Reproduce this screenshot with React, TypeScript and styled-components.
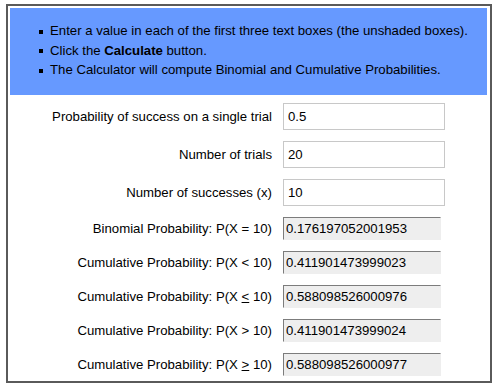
import React from "react";
import styled, { createGlobalStyle } from "styled-components";

const Global = createGlobalStyle`
  html, body { margin: 0; padding: 0; background: #fff; }
  body { font-family: "Liberation Sans", Arial, Helvetica, sans-serif; font-size: 13.2px; color: #000; }
`;

const Page = styled.div`
  padding: 4px 0 0 6px;
`;

const Frame = styled.div`
  border: 2px solid #5a5a5a;
  padding: 2px 3px 0 2px;
  box-sizing: content-box;
  width: 477px;
`;

const Instructions = styled.ul`
  margin: 0;
  background: #6699ff;
  padding: 13px 8px 15px 40px;
  list-style: none;
`;

const Item = styled.li`
  line-height: 19.5px;
  font-size: 13.2px;
  white-space: nowrap;

  &::before {
    content: "";
    display: inline-block;
    width: 4px;
    height: 4px;
    background: #000;
    vertical-align: middle;
    margin: 0 7px 0 -11px;
  }
`;

const Form = styled.div`
  display: grid;
  grid-template-columns: 1fr 162px;
  column-gap: 11px;
  row-gap: 11px;
  padding: 8px 42px 5px 0;
  align-items: center;
`;

const Label = styled.label`
  text-align: right;
  white-space: nowrap;
`;

const Field = styled.input<{ $shaded?: boolean }>`
  box-sizing: border-box;
  font-family: "Liberation Sans", Arial, Helvetica, sans-serif;
  font-size: 13.2px;
  color: #000;
  margin: 0;
  outline: none;
  width: ${(p) => (p.$shaded ? "158px" : "162px")};
  height: ${(p) => (p.$shaded ? "23px" : "27px")};
  padding: ${(p) => (p.$shaded ? "0 2px" : "0 4px")};
  background: ${(p) => (p.$shaded ? "#eeeeee" : "#ffffff")};
  border: ${(p) => (p.$shaded ? "1px solid #eeeeee" : "1px solid #c8c8c8")};
  border-top-color: ${(p) => (p.$shaded ? "#7c7c7c" : "#c8c8c8")};
  border-left-color: ${(p) => (p.$shaded ? "#7c7c7c" : "#c8c8c8")};
`;

const inputs = [
  { label: "Probability of success on a single trial", value: "0.5" },
  { label: "Number of trials", value: "20" },
  { label: "Number of successes (x)", value: "10" },
];

const results: { label: React.ReactNode; value: string }[] = [
  { label: <>Binomial Probability: P(X = 10)</>, value: "0.176197052001953" },
  { label: <>Cumulative Probability: P(X &lt; 10)</>, value: "0.411901473999023" },
  { label: <>Cumulative Probability: P(X <u>&lt;</u> 10)</>, value: "0.588098526000976" },
  { label: <>Cumulative Probability: P(X &gt; 10)</>, value: "0.411901473999024" },
  { label: <>Cumulative Probability: P(X <u>&gt;</u> 10)</>, value: "0.588098526000977" },
];

export default function App() {
  return (
    <>
      <Global />
      <Page>
        <Frame>
          <Instructions>
            <Item>Enter a value in each of the first three text boxes (the unshaded boxes).</Item>
            <Item>
              Click the <b>Calculate</b> button.
            </Item>
            <Item>The Calculator will compute Binomial and Cumulative Probabilities.</Item>
          </Instructions>
          <Form>
            {inputs.map((r) => (
              <React.Fragment key={r.label}>
                <Label>{r.label}</Label>
                <Field defaultValue={r.value} />
              </React.Fragment>
            ))}
            {results.map((r, i) => (
              <React.Fragment key={i}>
                <Label>{r.label}</Label>
                <Field $shaded readOnly value={r.value} />
              </React.Fragment>
            ))}
          </Form>
        </Frame>
      </Page>
    </>
  );
}
